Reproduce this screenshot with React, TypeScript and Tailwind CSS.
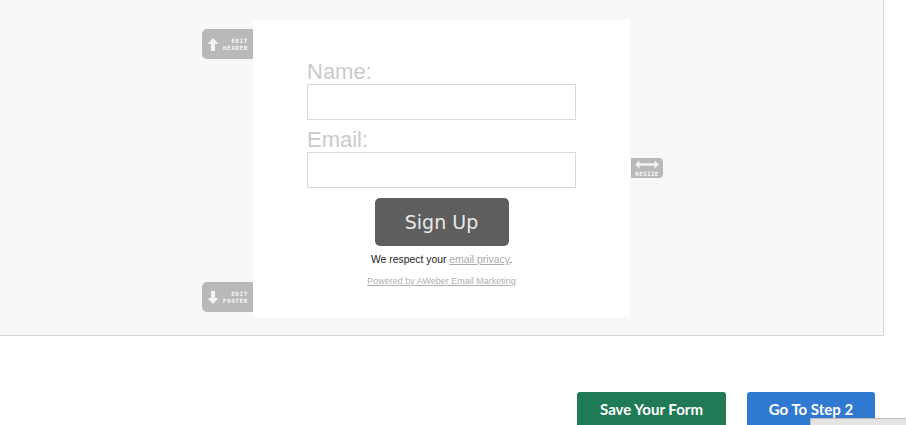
import React from 'react';

const tinyFont = { fontFamily: '"DejaVu Sans Mono", monospace' };

const SideTab: React.FC<{ label: [string, string]; dir: 'up' | 'down'; className: string }> = ({ label, dir, className }) => (
  <div className={`absolute flex items-center justify-between rounded-l-[5px] bg-[#b9b9b9] pl-[5px] pr-[5px] ${className}`}>
    <svg width="12" height="15" viewBox="0 0 12 15">
      {dir === 'up' ? (
        <path d="M6 1 L11.5 7 L8 7 L8 14 L4 14 L4 7 L0.5 7 Z" fill="#f4f4f4" />
      ) : (
        <path d="M6 14 L11.5 8 L8 8 L8 1 L4 1 L4 8 L0.5 8 Z" fill="#f4f4f4" />
      )}
    </svg>
    <div className="flex flex-col items-end text-[6px] font-bold leading-[7px] tracking-[0.6px] text-[#f6f6f6]" style={tinyFont}>
      <span>{label[0]}</span>
      <span>{label[1]}</span>
    </div>
  </div>
);

export default function App() {
  return (
    <div className="relative h-[425px] w-[906px] overflow-hidden bg-white">
      <div className="h-[336px] w-[884px] border-r border-b border-[#d6d6d6] bg-[#f8f8f8] pt-[20px] pl-[253px]">
        <div className="relative h-[297px] w-[377px] bg-white">
          <SideTab label={['EDIT', 'HEADER']} dir="up" className="-left-[51px] top-[9px] h-[30px] w-[51px]" />
          <SideTab label={['EDIT', 'FOOTER']} dir="down" className="-left-[51px] top-[262px] h-[30px] w-[51px]" />
          <div className="absolute -right-[33px] top-[138px] flex h-[20px] w-[32px] flex-col items-center justify-center rounded-r-[4px] bg-[#b9b9b9]">
            <svg width="26" height="9" viewBox="0 0 26 9">
              <path d="M1 4.5 L5.5 0.5 L5.5 3.3 L20.5 3.3 L20.5 0.5 L25 4.5 L20.5 8.5 L20.5 5.7 L5.5 5.7 L5.5 8.5 Z" fill="#f4f4f4" />
            </svg>
            <span className="mt-[1px] text-[6px] font-bold leading-[7px] tracking-[0.3px] text-[#f6f6f6]" style={tinyFont}>RESIZE</span>
          </div>

          <div className="flex flex-col pt-[40px] pl-[54px]" style={{ fontFamily: '"Liberation Sans", Arial, sans-serif' }}>
            <div className="h-[24px] text-[22px] leading-[24px] text-[#cbcbcb]">Name:</div>
            <div className="h-[36px] w-[269px] border border-[#d9d9d9] bg-white" />
            <div className="mt-[8px] h-[24px] text-[22px] leading-[24px] text-[#cbcbcb]">Email:</div>
            <div className="h-[36px] w-[269px] border border-[#d9d9d9] bg-white" />
          </div>

          <div className="flex flex-col items-center">
            <div
              className="mt-[10px] flex h-[48px] w-[134px] items-center justify-center rounded-[5px] bg-[#5e5e5e] text-[19px] text-[#e8e8e8]"
              style={{ fontFamily: '"DejaVu Sans", Verdana, sans-serif' }}
            >
              Sign Up
            </div>
            <div className="mt-[7px] text-[10.4px] leading-[14px] text-[#222]" style={{ fontFamily: '"Liberation Sans", Arial, sans-serif' }}>
              We respect your <span className="text-[#aaa] underline">email privacy</span>.
            </div>
            <div className="mt-[9px] text-[9px] leading-[11px] text-[#b0b0b0] underline" style={{ fontFamily: '"Liberation Sans", Arial, sans-serif' }}>
              Powered by AWeber Email Marketing
            </div>
          </div>
        </div>
      </div>

      <div className="flex justify-end gap-[21px] pt-[56px] pr-[31px]" style={{ fontFamily: 'Lato, "Open Sans", sans-serif' }}>
        <div className="flex h-[40px] w-[149px] items-center justify-center rounded-[3px] bg-[#1f7a55] pb-[6px] text-[15px] font-bold text-white">
          Save Your Form
        </div>
        <div className="flex h-[40px] w-[128px] items-center justify-center rounded-[3px] bg-[#2f79d0] pb-[6px] text-[15px] font-bold text-white">
          Go To Step 2
        </div>
      </div>

      <div className="absolute left-[810px] top-[418px] h-[7px] w-[96px] border-t border-l border-[#bbb] bg-[#e4e4e4]" />
    </div>
  );
}
